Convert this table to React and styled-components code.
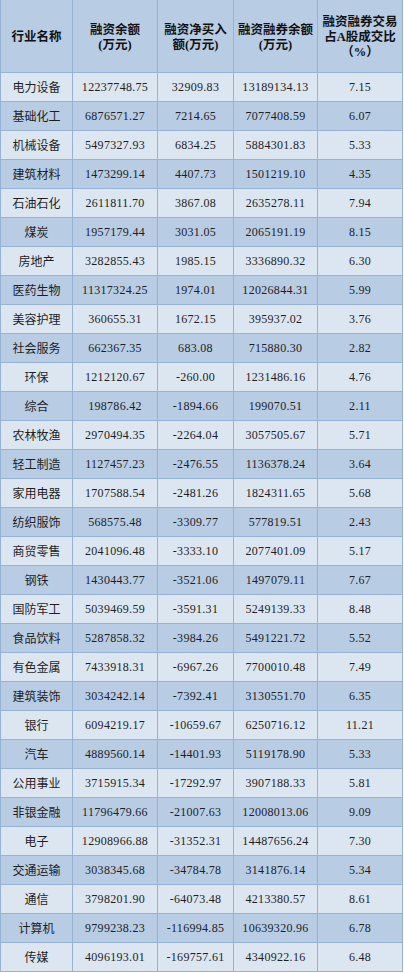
import React from "react";
import styled, { createGlobalStyle } from "styled-components";

const Global = createGlobalStyle`
  html, body { margin: 0; padding: 0; background: #ffffff; }
  body { font-family: "Liberation Serif", "Noto Sans CJK SC", serif; }
`;

const rows = [
  ["电力设备", "12237748.75", "32909.83", "13189134.13", "7.15"],
  ["基础化工", "6876571.27", "7214.65", "7077408.59", "6.07"],
  ["机械设备", "5497327.93", "6834.25", "5884301.83", "5.33"],
  ["建筑材料", "1473299.14", "4407.73", "1501219.10", "4.35"],
  ["石油石化", "2611811.70", "3867.08", "2635278.11", "7.94"],
  ["煤炭", "1957179.44", "3031.05", "2065191.19", "8.15"],
  ["房地产", "3282855.43", "1985.15", "3336890.32", "6.30"],
  ["医药生物", "11317324.25", "1974.01", "12026844.31", "5.99"],
  ["美容护理", "360655.31", "1672.15", "395937.02", "3.76"],
  ["社会服务", "662367.35", "683.08", "715880.30", "2.82"],
  ["环保", "1212120.67", "-260.00", "1231486.16", "4.76"],
  ["综合", "198786.42", "-1894.66", "199070.51", "2.11"],
  ["农林牧渔", "2970494.35", "-2264.04", "3057505.67", "5.71"],
  ["轻工制造", "1127457.23", "-2476.55", "1136378.24", "3.64"],
  ["家用电器", "1707588.54", "-2481.26", "1824311.65", "5.68"],
  ["纺织服饰", "568575.48", "-3309.77", "577819.51", "2.43"],
  ["商贸零售", "2041096.48", "-3333.10", "2077401.09", "5.17"],
  ["钢铁", "1430443.77", "-3521.06", "1497079.11", "7.67"],
  ["国防军工", "5039469.59", "-3591.31", "5249139.33", "8.48"],
  ["食品饮料", "5287858.32", "-3984.26", "5491221.72", "5.52"],
  ["有色金属", "7433918.31", "-6967.26", "7700010.48", "7.49"],
  ["建筑装饰", "3034242.14", "-7392.41", "3130551.70", "6.35"],
  ["银行", "6094219.17", "-10659.67", "6250716.12", "11.21"],
  ["汽车", "4889560.14", "-14401.93", "5119178.90", "5.33"],
  ["公用事业", "3715915.34", "-17292.97", "3907188.33", "5.81"],
  ["非银金融", "11796479.66", "-21007.63", "12008013.06", "9.09"],
  ["电子", "12908966.88", "-31352.31", "14487656.24", "7.30"],
  ["交通运输", "3038345.68", "-34784.78", "3141876.14", "5.34"],
  ["通信", "3798201.90", "-64073.48", "4213380.57", "8.61"],
  ["计算机", "9799238.23", "-116994.85", "10639320.96", "6.78"],
  ["传媒", "4096193.01", "-169757.61", "4340922.16", "6.48"],
];

const Grid = styled.div`
  display: grid;
  grid-template-columns: 71px 84px 75px 83px 84px;
  grid-template-rows: 72px;
  grid-auto-rows: 28px;
  gap: 1px;
  width: 403px;
  box-sizing: border-box;
  padding: 0 1px 1px 1px;
  background: #95b3d7;
`;

const HeadCell = styled.div`
  box-sizing: border-box;
  padding-top: 3px;
  background: #b8cce4;
  display: flex;
  align-items: center;
  justify-content: center;
  text-align: center;
  font-size: 12.5px;
  line-height: 15px;
  font-weight: 700;
  color: #111;
`;

const Cell = styled.div`
  background: ${(p) => (p.$dark ? "#b8cce4" : "#dce6f1")};
  display: flex;
  align-items: center;
  justify-content: center;
  font-size: 12px;
  color: #1e1e1e;
  white-space: nowrap;
  letter-spacing: ${(p) => (p.$num ? "0.3px" : "0")};
`;

const headers = [
  ["行业名称"],
  ["融资余额", "(万元)"],
  ["融资净买入", "额(万元)"],
  ["融资融券余额", "(万元)"],
  ["融资融券交易", "占A股成交比", "（%）"],
];

export default function App() {
  return (
    <>
      <Global />
      <Grid>
        {headers.map((lines, i) => (
          <HeadCell key={"h" + i}>
            <div>
              {lines.map((l, j) => (
                <React.Fragment key={j}>
                  {j > 0 && <br />}
                  {l}
                </React.Fragment>
              ))}
            </div>
          </HeadCell>
        ))}
        {rows.map((r, ri) =>
          r.map((v, ci) => (
            <Cell key={ri + "-" + ci} $dark={ri % 2 === 1} $num={ci > 0}>
              {v}
            </Cell>
          ))
        )}
      </Grid>
    </>
  );
}
